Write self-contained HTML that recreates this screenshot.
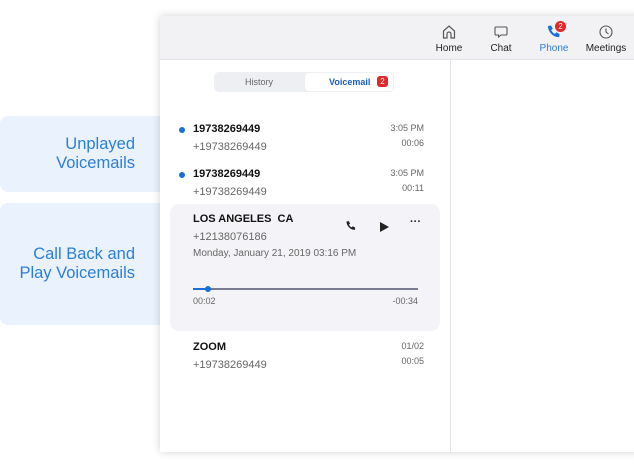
<!DOCTYPE html>
<html><head><style>
*{margin:0;padding:0;box-sizing:border-box}
body{width:634px;height:467px;background:#fff;font-family:"Liberation Sans","DejaVu Sans",sans-serif;position:relative;overflow:hidden}
.abs{position:absolute}
.call{background:#e9f2fd;border-radius:8px;color:#2d7fd6;font-size:16.5px;text-align:right;line-height:19px;padding-right:33px}
.win{left:160px;top:16px;width:480px;height:436px;background:#fff;box-shadow:0 0 8px rgba(0,0,0,.18)}
.hdr{left:0;top:0;width:480px;height:44px;background:#f2f2f4;border-bottom:1px solid #e4e4e8}
.nav{top:8px;font-size:10px;color:#222;text-align:center}
.b{font-weight:bold;font-size:11px;color:#111}
.g{font-size:11px;color:#666}
.t{font-size:9px;color:#666;text-align:right}
.dot{width:6px;height:6px;border-radius:50%;background:#1a6ed8}
</style></head><body>
<div class="abs call" style="left:0;top:116px;width:168px;height:76px;padding-top:19px">Unplayed<br>Voicemails</div>
<div class="abs call" style="left:0;top:203px;width:168px;height:122px;padding-top:42px">Call Back and<br>Play Voicemails</div>
<div class="abs win">
 <div class="abs hdr"></div>
 <div class="abs nav" style="left:274px;width:30px">
  <svg width="16" height="16" viewBox="0 0 16 16"><path d="M2.5 7L8 2l5.5 5v7h-3.5v-4a2 2 0 0 0-4 0v4H2.5z" fill="none" stroke="#555" stroke-width="1.2"/></svg><div style="margin-top:0">Home</div></div>
 <div class="abs nav" style="left:326px;width:30px">
  <svg width="16" height="16" viewBox="0 0 16 16"><path d="M3 3h10a1 1 0 0 1 1 1v6a1 1 0 0 1-1 1H8l-2.5 2v-2H3a1 1 0 0 1-1-1V4a1 1 0 0 1 1-1z" fill="none" stroke="#555" stroke-width="1.1"/></svg><div style="margin-top:0">Chat</div></div>
 <div class="abs nav" style="left:377px;width:34px;color:#2d7fd6">
  <svg width="16" height="16" viewBox="0 0 16 16"><path d="M2 2l3-.5 1.8 3.3-1.6 1.3c.8 1.8 2 3 3.8 3.8l1.3-1.6 3.3 1.8-.5 3C7.5 13.5 2 8 2 2z" fill="#1a6ed8"/></svg><div style="margin-top:0">Phone</div></div>
 <div class="abs" style="left:395px;top:5px;width:11px;height:11px;border-radius:50%;background:#e02828;color:#fff;font-size:8px;text-align:center;line-height:11px">2</div>
 <div class="abs nav" style="left:424px;width:44px">
  <svg width="16" height="16" viewBox="0 0 16 16"><circle cx="8" cy="8" r="6" fill="none" stroke="#555" stroke-width="1.1"/><path d="M8 4.5V8l2.5 2" fill="none" stroke="#555" stroke-width="1.1"/></svg><div style="margin-top:0">Meetings</div></div>
 <div class="abs" style="left:290px;top:44px;width:1px;height:392px;background:#e6e6ea"></div>
 <div class="abs" style="left:54px;top:56px;width:180px;height:20px;background:#eeeff3;border-radius:5px"></div>
 <div class="abs" style="left:145px;top:57px;width:88px;height:18px;background:#fff;border-radius:4px"></div>
 <div class="abs" style="left:85px;top:61px;font-size:9px;color:#666">History</div>
 <div class="abs" style="left:169px;top:61px;font-size:9px;color:#1a5fb8;font-weight:bold">Voicemail</div>
 <div class="abs" style="left:217px;top:60px;width:11px;height:11px;border-radius:3px;background:#e02828;color:#fff;font-size:8px;text-align:center;line-height:11px">2</div>

 <div class="abs dot" style="left:19px;top:111px"></div>
 <div class="abs b" style="left:33px;top:107px">19738269449</div>
 <div class="abs g" style="left:33px;top:125px">+19738269449</div>
 <div class="abs t" style="left:220px;top:107px;width:44px">3:05 PM</div>
 <div class="abs t" style="left:220px;top:122px;width:44px">00:06</div>

 <div class="abs dot" style="left:19px;top:156px"></div>
 <div class="abs b" style="left:33px;top:152px">19738269449</div>
 <div class="abs g" style="left:33px;top:170px">+19738269449</div>
 <div class="abs t" style="left:220px;top:152px;width:44px">3:05 PM</div>
 <div class="abs t" style="left:220px;top:167px;width:44px">00:11</div>

 <div class="abs" style="left:10px;top:188px;width:270px;height:127px;background:#f4f4f8;border-radius:9px"></div>
 <div class="abs b" style="left:33px;top:197px">LOS ANGELES&nbsp; CA</div>
 <div class="abs g" style="left:33px;top:215px">+12138076186</div>
 <div class="abs g" style="left:33px;top:232px;font-size:10px">Monday, January 21, 2019 03:16 PM</div>
 <svg class="abs" style="left:185px;top:204px" width="12" height="12" viewBox="0 0 16 16"><path d="M2 2l3-.5 1.8 3.3-1.6 1.3c.8 1.8 2 3 3.8 3.8l1.3-1.6 3.3 1.8-.5 3C7.5 13.5 2 8 2 2z" fill="#222"/></svg>
 <svg class="abs" style="left:220px;top:206px" width="9" height="10" viewBox="0 0 9 10"><path d="M0 0l9 5-9 5z" fill="#222"/></svg>
 <div class="abs" style="left:250px;top:200px;font-size:11px;color:#222;font-weight:bold">···</div>
 <div class="abs" style="left:33px;top:272px;width:225px;height:2px;background:#7a7a90"></div>
 <div class="abs" style="left:33px;top:272px;width:16px;height:2px;background:#1a6ed8"></div>
 <div class="abs" style="left:45px;top:270px;width:6px;height:6px;border-radius:50%;background:#1a6ed8"></div>
 <div class="abs g" style="left:33px;top:280px;font-size:9px">00:02</div>
 <div class="abs t" style="left:210px;top:280px;width:48px">-00:34</div>

 <div class="abs b" style="left:33px;top:325px">ZOOM</div>
 <div class="abs g" style="left:33px;top:343px">+19738269449</div>
 <div class="abs t" style="left:220px;top:325px;width:44px">01/02</div>
 <div class="abs t" style="left:220px;top:340px;width:44px">00:05</div>
</div>
</body></html>
